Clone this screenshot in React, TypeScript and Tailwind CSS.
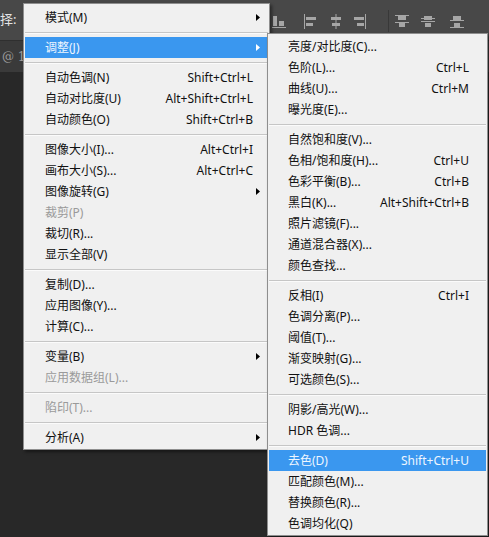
import React from "react";

type Entry =
  | "sep"
  | { label: string; shortcut?: string; sub?: boolean; disabled?: boolean; active?: boolean };

const imageMenu: Entry[] = [
  { label: "模式(M)", sub: true },
  "sep",
  { label: "调整(J)", sub: true, active: true },
  "sep",
  { label: "自动色调(N)", shortcut: "Shift+Ctrl+L" },
  { label: "自动对比度(U)", shortcut: "Alt+Shift+Ctrl+L" },
  { label: "自动颜色(O)", shortcut: "Shift+Ctrl+B" },
  "sep",
  { label: "图像大小(I)...", shortcut: "Alt+Ctrl+I" },
  { label: "画布大小(S)...", shortcut: "Alt+Ctrl+C" },
  { label: "图像旋转(G)", sub: true },
  { label: "裁剪(P)", disabled: true },
  { label: "裁切(R)..." },
  { label: "显示全部(V)" },
  "sep",
  { label: "复制(D)..." },
  { label: "应用图像(Y)..." },
  { label: "计算(C)..." },
  "sep",
  { label: "变量(B)", sub: true },
  { label: "应用数据组(L)...", disabled: true },
  "sep",
  { label: "陷印(T)...", disabled: true },
  "sep",
  { label: "分析(A)", sub: true },
];

const adjustMenu: Entry[] = [
  { label: "亮度/对比度(C)..." },
  { label: "色阶(L)...", shortcut: "Ctrl+L" },
  { label: "曲线(U)...", shortcut: "Ctrl+M" },
  { label: "曝光度(E)..." },
  "sep",
  { label: "自然饱和度(V)..." },
  { label: "色相/饱和度(H)...", shortcut: "Ctrl+U" },
  { label: "色彩平衡(B)...", shortcut: "Ctrl+B" },
  { label: "黑白(K)...", shortcut: "Alt+Shift+Ctrl+B" },
  { label: "照片滤镜(F)..." },
  { label: "通道混合器(X)..." },
  { label: "颜色查找..." },
  "sep",
  { label: "反相(I)", shortcut: "Ctrl+I" },
  { label: "色调分离(P)..." },
  { label: "阈值(T)..." },
  { label: "渐变映射(G)..." },
  { label: "可选颜色(S)..." },
  "sep",
  { label: "阴影/高光(W)..." },
  { label: "HDR 色调..." },
  "sep",
  { label: "去色(D)", shortcut: "Shift+Ctrl+U", active: true },
  { label: "匹配颜色(M)..." },
  { label: "替换颜色(R)..." },
  { label: "色调均化(Q)" },
];

const font = { fontFamily: '"Noto Sans", "Noto Sans CJK SC", sans-serif' };

const Arrow = ({ white }: { white?: boolean }) => (
  <svg width="4" height="7" viewBox="0 0 4 7">
    <path d="M0 0 L4 3.5 L0 7 Z" fill={white ? "#ffffff" : "#000000"} />
  </svg>
);

const Separator = () => (
  <div className="h-[9px] flex items-center">
    <div className="w-full border-t border-[#c6c6c6] border-b border-b-[#fbfbfb]" />
  </div>
);

const Menu = ({ items, padLeft, padRight, arrows }: { items: Entry[]; padLeft: string; padRight: string; arrows?: boolean }) => (
  <div className="flex flex-col">
    {items.map((it, i) => {
      if (it === "sep") return <Separator key={i} />;
      const color = it.active ? "text-[#eef6ff]" : it.disabled ? "text-[#9a9a9a]" : "text-[#111111]";
      return (
        <div
          key={i}
          className={`h-[21px] flex items-center text-[12px] leading-none ${padLeft} ${color} ${it.active ? "bg-[#3a97ef]" : ""}`}
        >
          <span className="flex-1 whitespace-nowrap">{it.label}</span>
          {it.shortcut && <span className={`whitespace-nowrap ${arrows ? "" : padRight}`}>{it.shortcut}</span>}
          {arrows && (
            <span className="w-[15px] pl-[3px] flex items-center">{it.sub && <Arrow white={it.active} />}</span>
          )}
        </div>
      );
    })}
  </div>
);

// align / distribute buttons of the move tool options bar
const AlignIcon = ({ kind }: { kind: number }) => (
  <svg width="16" height="15" viewBox="0 0 16 15" className="shrink-0 text-[#a6a6a6]">
    {kind === 0 && (
      <g fill="currentColor">
        <rect x="2" y="2" width="4" height="10" />
        <rect x="8" y="7" width="5" height="5" />
        <rect x="1" y="13" width="14" height="1" />
      </g>
    )}
    {kind === 1 && (
      <g fill="currentColor">
        <rect x="2" y="0" width="1" height="15" />
        <rect x="4" y="3" width="10" height="3" />
        <rect x="4" y="9" width="7" height="3" />
      </g>
    )}
    {kind === 2 && (
      <g fill="currentColor">
        <rect x="7.5" y="0" width="1" height="15" />
        <rect x="3" y="3" width="10" height="3" />
        <rect x="4" y="9" width="8" height="3" />
      </g>
    )}
    {kind === 3 && (
      <g fill="currentColor">
        <rect x="13" y="0" width="1" height="15" />
        <rect x="2" y="3" width="10" height="3" />
        <rect x="5" y="9" width="7" height="3" />
      </g>
    )}
    {kind >= 4 && (
      <g fill="currentColor">
        <rect x="1" y={kind === 4 ? 1 : kind === 5 ? 4 : 6} width="14" height="1" />
        <rect x="1" y={kind === 4 ? 8 : kind === 5 ? 7 : 13} width="14" height="1" />
        <rect x="4" y="2" width="8" height="4" />
        <rect x="5" y="9" width="6" height="4" />
      </g>
    )}
  </svg>
);

export default function App() {
  return (
    <div className="relative w-[489px] h-[537px] overflow-hidden bg-[#282828]" style={font}>
      {/* options bar */}
      <div className="h-[41px] bg-[#484848] border-b border-[#2f2f2f] flex items-center">
        <span className="w-[20px] shrink-0 text-[13px] text-[#e4e4e4] whitespace-nowrap">择:</span>
        <div className="ml-[251px] flex items-center pt-[2px]">
          <AlignIcon kind={0} />
          <span className="ml-[15px]" />
          <AlignIcon kind={1} />
          <span className="ml-[10px]" />
          <AlignIcon kind={2} />
          <span className="ml-[8px]" />
          <AlignIcon kind={3} />
          <span className="ml-[20px] w-px h-[22px] bg-[#383838] mr-[5px]" />
          <AlignIcon kind={4} />
          <span className="ml-[10px]" />
          <AlignIcon kind={5} />
          <span className="ml-[13px]" />
          <AlignIcon kind={6} />
        </div>
      </div>
      {/* document tabs */}
      <div className="h-[31px] bg-[#3a3a3a] flex items-center">
        <span className="text-[12px] text-[#9c9c9c] pl-[2px]" style={{ fontFamily: '"DejaVu Serif", serif' }}>
          @ 100%
        </span>
      </div>

      {/* Image menu */}
      <div className="absolute left-[23px] top-[3px] w-[247px] bg-[#f0f0f0] border border-[#8e8e8e] pt-[3px] pb-px px-px shadow-[2px_2px_3px_rgba(0,0,0,0.45)]">
        <Menu items={imageMenu} padLeft="pl-[20px]" padRight="" arrows />
      </div>

      {/* Adjustments submenu */}
      <div className="absolute left-[267px] top-[33px] w-[221px] bg-[#f0f0f0] border border-[#8e8e8e] pt-[2px] pb-px px-px shadow-[2px_2px_3px_rgba(0,0,0,0.45)]">
        <Menu items={adjustMenu} padLeft="pl-[19px]" padRight="pr-[17px]" />
      </div>
    </div>
  );
}
